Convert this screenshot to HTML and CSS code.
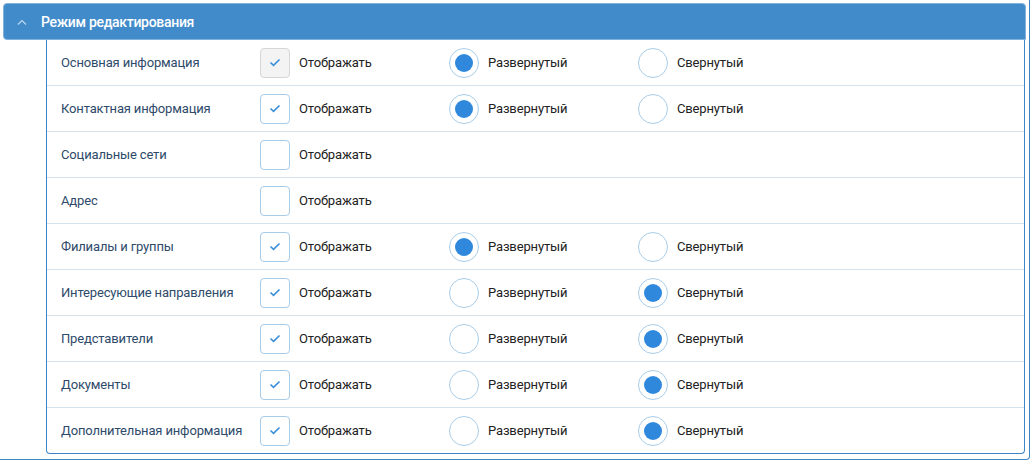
FILE: index.html
```html
<!DOCTYPE html>
<html lang="ru">
<head>
<meta charset="utf-8">
<link rel="stylesheet" href="styles.css">
</head>
<body>
<div class="outer">
  <div class="panel-head">
    <svg class="chev" width="10" height="6" viewBox="0 0 10 6"><path d="M1 5.5 L5 1.5 L9 5.5" fill="none" stroke="#bcd6ee" stroke-width="1.2"/></svg>
    <span class="title">Режим редактирования</span>
  </div>
  <div class="body">
    <div class="box" id="box"></div>
  </div>
</div>
<script src="app.js"></script>
</body>
</html>
```
FILE: app.js
```js
var rows = [
  ["Основная информация", "dis", 1],
  ["Контактная информация", "on", 1],
  ["Социальные сети", "off", 0],
  ["Адрес", "off", 0],
  ["Филиалы и группы", "on", 1],
  ["Интересующие направления", "on", 2],
  ["Представители", "on", 2],
  ["Документы", "on", 2],
  ["Дополнительная информация", "on", 2]
];
var check = '<svg width="12" height="9" viewBox="0 0 12 9"><path d="M1.5 4.5 L4.5 7.3 L10.5 1.5" fill="none" stroke="#3a8fd9" stroke-width="1.6"/></svg>';
var html = "";
rows.forEach(function (r) {
  html += '<div class="row"><div class="label">' + r[0] + '</div>';
  html += '<div class="opt"><span class="cb cb-' + r[1] + '">' + (r[1] !== "off" ? check : "") + '</span><span class="txt">Отображать</span></div>';
  if (r[2]) {
    html += '<div class="opt"><span class="rd' + (r[2] === 1 ? " rd-on" : "") + '"></span><span class="txt">Развернутый</span></div>';
    html += '<div class="opt"><span class="rd' + (r[2] === 2 ? " rd-on" : "") + '"></span><span class="txt">Свернутый</span></div>';
  }
  html += '</div>';
});
document.getElementById("box").innerHTML = html;
```
FILE: styles.css
```css
html, body {
  margin: 0;
  padding: 0;
  background: #fff;
  font-family: Roboto, "Liberation Sans", Arial, sans-serif;
}
.outer {
  width: 1029px;
  height: 456px;
  border-right: 1px solid #3d86c6;
  border-bottom: 1px solid #3d86c6;
  border-bottom-right-radius: 4px;
  box-sizing: content-box;
  padding-top: 3px;
}
.panel-head {
  margin-left: 3px;
  width: 1021px;
  height: 35px;
  background: #428bca;
  border: 1px solid #82b2dc;
  border-radius: 4px 4px 0 4px;
  display: flex;
  align-items: center;
  color: #fff;
}
.chev {
  margin-left: 13px;
  margin-right: 14px;
}
.title {
  font-size: 14px;
  font-weight: 500;
  letter-spacing: -0.3px;
}
.body {
  padding-left: 46px;
}
.box {
  width: 977px;
  border: 1px solid #3d86c6;
  border-top: none;
  border-radius: 0 0 4px 4px;
}
.row {
  height: 45px;
  display: grid;
  grid-template-columns: 213px 189px 189px 189px;
  align-items: center;
  border-bottom: 1px solid #d3e2ec;
  font-size: 13px;
  letter-spacing: -0.15px;
}
.row:last-child {
  border-bottom: none;
}
.label {
  padding-left: 14px;
  color: #2e4a6a;
}
.opt {
  display: flex;
  align-items: center;
  color: #222;
}
.cb {
  width: 28px;
  height: 28px;
  border: 1px solid #a8cde9;
  border-radius: 4px;
  display: flex;
  align-items: center;
  justify-content: center;
  margin-right: 9px;
  background: #fff;
}
.cb-dis {
  background: #f3f3f3;
  border-color: #d6d6d6;
}
.rd {
  width: 28px;
  height: 28px;
  border: 1px solid #a8cde9;
  border-radius: 50%;
  margin-right: 9px;
  display: flex;
  align-items: center;
  justify-content: center;
}
.rd-on::after {
  content: "";
  width: 18px;
  height: 18px;
  border-radius: 50%;
  background: #2f88dc;
}
```
